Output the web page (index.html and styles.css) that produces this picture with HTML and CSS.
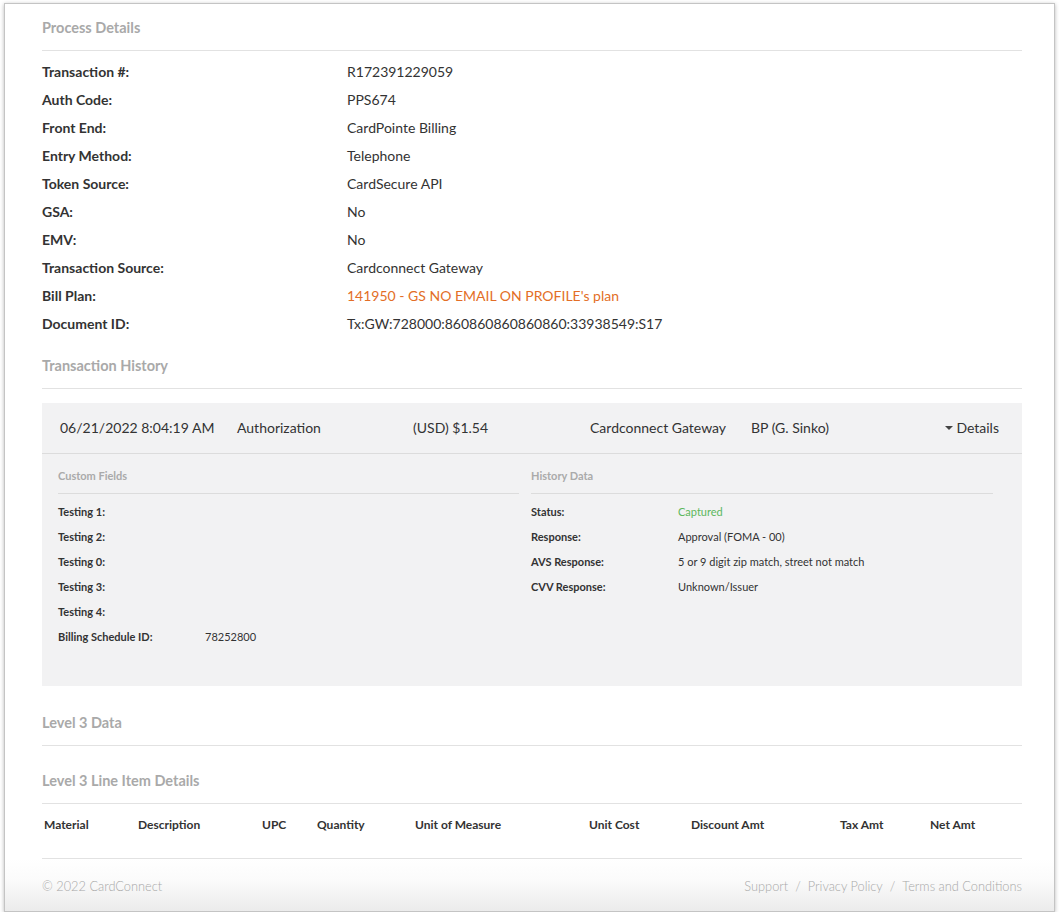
FILE: index.html
```html
<!DOCTYPE html>
<html>
<head>
<meta charset="utf-8">
<link rel="stylesheet" href="styles.css">
</head>
<body>
<div class="window">
  <div class="content">
    <h2 class="section-title">Process Details</h2>
    <div class="details">
      <div class="drow"><span class="dlabel">Transaction #:</span><span class="dval">R172391229059</span></div>
      <div class="drow"><span class="dlabel">Auth Code:</span><span class="dval">PPS674</span></div>
      <div class="drow"><span class="dlabel">Front End:</span><span class="dval">CardPointe Billing</span></div>
      <div class="drow"><span class="dlabel">Entry Method:</span><span class="dval">Telephone</span></div>
      <div class="drow"><span class="dlabel">Token Source:</span><span class="dval">CardSecure API</span></div>
      <div class="drow"><span class="dlabel">GSA:</span><span class="dval">No</span></div>
      <div class="drow"><span class="dlabel">EMV:</span><span class="dval">No</span></div>
      <div class="drow"><span class="dlabel">Transaction Source:</span><span class="dval">Cardconnect Gateway</span></div>
      <div class="drow"><span class="dlabel">Bill Plan:</span><span class="dval link">141950 - GS NO EMAIL ON PROFILE's plan</span></div>
      <div class="drow"><span class="dlabel">Document ID:</span><span class="dval">Tx:GW:728000:860860860860860:33938549:S17</span></div>
    </div>

    <h2 class="section-title th-title">Transaction History</h2>
    <div class="panel">
      <div class="panel-head">
        <span>06/21/2022 8:04:19 AM</span>
        <span>Authorization</span>
        <span>(USD) $1.54</span>
        <span>Cardconnect Gateway</span>
        <span>BP (G. Sinko)</span>
        <span class="toggle"><span class="caret"></span>Details</span>
      </div>
      <div class="panel-body">
        <div class="subcol">
          <h3 class="sub-title">Custom Fields</h3>
          <div class="srows">
            <div class="srow"><span class="slabel">Testing 1:</span><span class="sval"></span></div>
            <div class="srow"><span class="slabel">Testing 2:</span><span class="sval"></span></div>
            <div class="srow"><span class="slabel">Testing 0:</span><span class="sval"></span></div>
            <div class="srow"><span class="slabel">Testing 3:</span><span class="sval"></span></div>
            <div class="srow"><span class="slabel">Testing 4:</span><span class="sval"></span></div>
            <div class="srow"><span class="slabel">Billing Schedule ID:</span><span class="sval">78252800</span></div>
          </div>
        </div>
        <div class="subcol">
          <h3 class="sub-title">History Data</h3>
          <div class="srows">
            <div class="srow"><span class="slabel">Status:</span><span class="sval green">Captured</span></div>
            <div class="srow"><span class="slabel">Response:</span><span class="sval">Approval (FOMA - 00)</span></div>
            <div class="srow"><span class="slabel">AVS Response:</span><span class="sval">5 or 9 digit zip match, street not match</span></div>
            <div class="srow"><span class="slabel">CVV Response:</span><span class="sval">Unknown/Issuer</span></div>
          </div>
        </div>
      </div>
    </div>

    <h2 class="section-title l3-title">Level 3 Data</h2>
    <h2 class="section-title l3i-title">Level 3 Line Item Details</h2>
    <div class="ltable">
      <div class="lhead">
        <span>Material</span>
        <span>Description</span>
        <span>UPC</span>
        <span>Quantity</span>
        <span>Unit of Measure</span>
        <span>Unit Cost</span>
        <span>Discount Amt</span>
        <span>Tax Amt</span>
        <span>Net Amt</span>
      </div>
      <div class="lempty"></div>
    </div>
  </div>
  <footer class="footer">
    <span class="copy">© 2022 CardConnect</span>
    <nav class="links">
      <span>Support</span><span class="sep">/</span><span>Privacy Policy</span><span class="sep">/</span><span>Terms and Conditions</span>
    </nav>
  </footer>
</div>
</body>
</html>
```

FILE: styles.css
```css
* { box-sizing: border-box; }
html, body { margin: 0; padding: 0; background: #fff; }
body {
  padding: 3px 4px 0 4px;
  font-family: Lato, "Liberation Sans", sans-serif;
  color: #333;
  width: 1059px;
}
.window {
  width: 1051px;
  height: 909px;
  border: 1px solid #c4c4c4;
  box-shadow: 0 1px 4px rgba(0,0,0,0.28);
  background: #fff;
  display: flex;
  flex-direction: column;
}
.content {
  padding: 14px 32px 0 37px;
  flex: 1;
}
.section-title {
  margin: 0;
  font-size: 14.5px;
  line-height: 20px;
  font-weight: 700;
  color: #a9a9a9;
  padding-bottom: 12px;
  border-bottom: 1px solid #e2e2e2;
}
.details { margin-top: 6px; }
.drow {
  display: grid;
  grid-template-columns: 305px 1fr;
  height: 28px;
  align-items: center;
  font-size: 14px;
}
.dlabel { font-weight: 700; color: #333; }
.dval { color: #333; }
.link { color: #e36e26; }
.th-title { margin-top: 19px; }
.panel {
  margin-top: 14px;
  background: #f2f2f3;
}
.panel-head {
  display: grid;
  grid-template-columns: 177px 176px 177px 161px auto 1fr;
  align-items: center;
  height: 51px;
  padding: 0 23px 1px 18px;
  border-bottom: 1px solid #dcdcdc;
  font-size: 14px;
  color: #333;
}
.toggle { justify-self: end; display: flex; align-items: center; }
.caret {
  width: 0; height: 0;
  border-left: 4px solid transparent;
  border-right: 4px solid transparent;
  border-top: 4px solid #444;
  margin-right: 3px;
  margin-top: 1px;
}
.panel-body {
  display: grid;
  grid-template-columns: 461px 462px;
  column-gap: 12px;
  padding: 14px 29px 37px 16px;
}
.sub-title {
  margin: 0;
  font-size: 11px;
  line-height: 16px;
  font-weight: 700;
  color: #aaa;
  padding-bottom: 9px;
  border-bottom: 1px solid #dcdcdc;
}
.srows { margin-top: 5px; }
.srow {
  display: grid;
  grid-template-columns: 147px 1fr;
  height: 25px;
  align-items: center;
  font-size: 11px;
}
.slabel { font-weight: 700; color: #333; }
.sval { color: #333; }
.green { color: #5cb85c; }
.l3-title { margin-top: 27px; }
.l3i-title { margin-top: 25px; }
.lhead {
  display: grid;
  grid-template-columns: 94px 124px 55px 98px 174px 102px 149px 90px 1fr;
  padding: 13px 0 0 2px;
  font-size: 12px;
  line-height: 16px;
  font-weight: 700;
  color: #333;
}
.lempty {
  height: 26px;
  border-bottom: 1px solid #e2e2e2;
}
.footer {
  display: flex;
  justify-content: space-between;
  align-items: center;
  padding: 1px 32px 0 37px;
  height: 52px;
  font-size: 12.8px;
  font-weight: 300;
  color: #a8a8a8;
  background: linear-gradient(to bottom, #ffffff 0%, #fbfbfb 40%, #ebebeb 100%);
}
.links { display: flex; }
.sep { margin: 0 7px; }
```
